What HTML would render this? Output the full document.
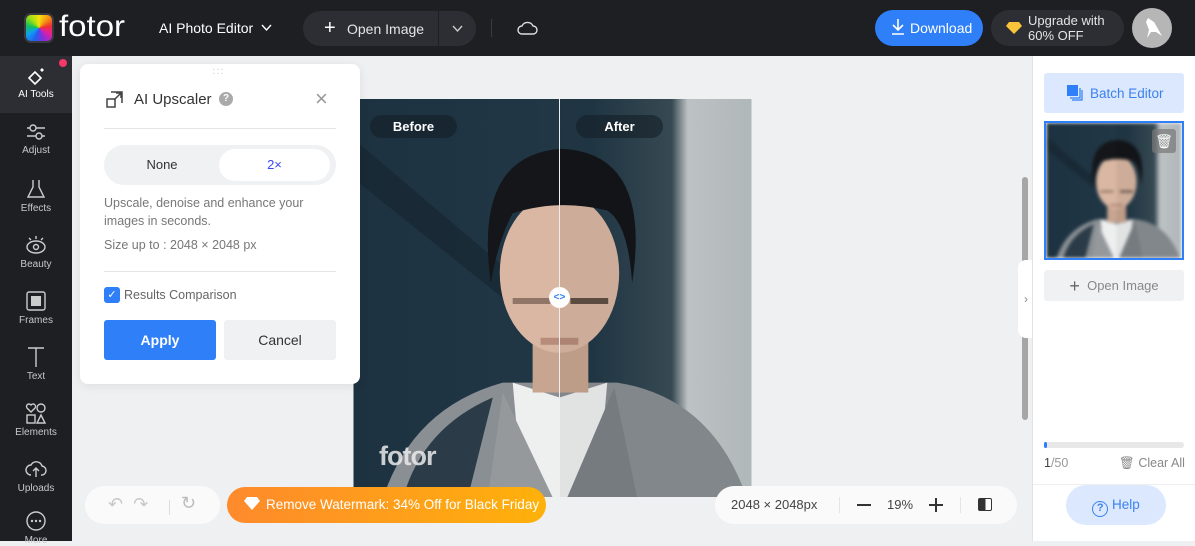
<!DOCTYPE html>
<html><head><meta charset="utf-8"><style>
*{box-sizing:border-box;margin:0;padding:0}
body{width:1195px;height:541px;overflow:hidden;background:#eff0f2;font-family:"Liberation Sans",sans-serif;position:relative}
.a{position:absolute}
.top{left:0;top:0;width:1195px;height:56px;background:#1e1f23}
.side{left:0;top:56px;width:72px;height:485px;background:#1e1f23}
.si{position:absolute;left:0;width:72px;text-align:center;color:#c5c8ce;font-size:10px}
.si svg{display:block;margin:0 auto 3px}
</style></head><body>
<svg width="0" height="0" style="position:absolute"><defs>
<linearGradient id="bg" x1="0" y1="0" x2="1" y2="0"><stop offset="0" stop-color="#1d3240"/><stop offset=".6" stop-color="#223847"/><stop offset=".8" stop-color="#3a4e58"/><stop offset=".84" stop-color="#c8cdcf"/><stop offset="1" stop-color="#b9c1c4"/></linearGradient>
<symbol id="portrait" viewBox="0 0 400 400">
<rect width="400" height="400" fill="url(#bg)"/>
<path d="M0 40 L200 210 L200 240 L0 80Z" fill="#16252f" opacity=".6"/>
<path d="M30 400 Q60 310 150 285 L265 285 Q360 300 395 400Z" fill="#8a8f93"/>
<path d="M50 400 Q70 330 140 300 L115 400Z" fill="#2b3c48"/>
<path d="M160 285 L207 300 L255 285 L245 400 L170 400Z" fill="#eef0f0"/>
<path d="M150 295 L200 400 L135 400Z" fill="#95999c"/>
<path d="M262 290 L215 400 L285 400Z" fill="#7d8286"/>
<rect x="180" y="225" width="56" height="70" fill="#c8a590"/>
<ellipse cx="207" cy="175" rx="60" ry="80" fill="#d9b7a2"/>
<path d="M138 185 Q120 55 210 50 Q300 55 280 185 Q276 125 255 112 Q205 100 160 115 Q146 140 138 185Z" fill="#14161a"/>
<rect x="160" y="200" width="38" height="6" fill="#4a362c" opacity=".5"/>
<rect x="218" y="200" width="38" height="6" fill="#2c211b" opacity=".7"/>
<rect x="188" y="240" width="38" height="7" fill="#a07060" opacity=".6"/>
<path d="M207 95 V260" stroke="none"/>
<path d="M207 0 V400 L400 400 V0Z" fill="#000" opacity=".05"/>
</symbol></defs></svg>

<div class="a top"></div>
<div class="a" style="left:24px;top:13px;width:30px;height:30px;border-radius:7px;background:conic-gradient(#f5e210,#f59a10,#f03030,#e020a0,#8030e0,#2060f0,#10a0f0,#10c060,#a0e010,#f5e210);border:2px solid #3a3b40"></div>
<div class="a" style="left:59px;top:10px;color:#fff;font-size:30px;transform:scaleX(1.1);transform-origin:left">fotor</div>
<div class="a" style="left:159px;top:20px;color:#fff;font-size:14px">AI Photo Editor</div>
<svg class="a" style="left:261px;top:24px" width="11" height="8"><path d="M1 1 L5.5 6 L10 1" stroke="#fff" stroke-width="1.4" fill="none"/></svg>
<div class="a" style="left:303px;top:11px;width:173px;height:35px;border-radius:18px;background:#2d2e33"></div>
<div class="a" style="left:438px;top:11px;width:1px;height:35px;background:#1e1f23"></div>
<div class="a" style="left:324px;top:17px;color:#fff;font-size:20px">+</div>
<div class="a" style="left:347px;top:21px;color:#e4e5e8;font-size:14px">Open Image</div>
<svg class="a" style="left:452px;top:25px" width="11" height="8"><path d="M1 1 L5.5 6 L10 1" stroke="#ccc" stroke-width="1.4" fill="none"/></svg>
<div class="a" style="left:491px;top:19px;width:1px;height:18px;background:#3a3b40"></div>
<svg class="a" style="left:516px;top:19px" width="22" height="18" viewBox="0 0 22 18"><path d="M6 15 H17 A4 4 0 0 0 17 7 A6 6 0 0 0 6 7 A4 4 0 0 0 6 15Z" fill="none" stroke="#ddd" stroke-width="1.4"/></svg>
<div class="a" style="left:875px;top:10px;width:108px;height:36px;border-radius:18px;background:#2e7ff8"></div>
<svg class="a" style="left:890px;top:18px" width="16" height="18"><path d="M8 1 V12 M3 7 L8 12 L13 7 M2 16 H14" stroke="#fff" stroke-width="1.6" fill="none"/></svg>
<div class="a" style="left:910px;top:20px;color:#fff;font-size:14px">Download</div>
<div class="a" style="left:991px;top:10px;width:133px;height:36px;border-radius:18px;background:#2d2e33"></div>
<svg class="a" style="left:1006px;top:22px" width="16" height="12"><path d="M3 0 H13 L16 4 L8 12 L0 4Z" fill="#f7c43a"/></svg>
<div class="a" style="left:1028px;top:13px;color:#e4e5e8;font-size:13px;line-height:15px">Upgrade with<br>60% OFF</div>
<div class="a" style="left:1132px;top:8px;width:40px;height:40px;border-radius:50%;background:#b6b6b6"></div>
<svg class="a" style="left:1142px;top:16px" width="22" height="24"><path d="M6 2 L12 6 L20 20 L14 16 L9 16 L5 22 L7 14 L4 6Z" fill="#fff"/></svg>

<div class="a side"></div>
<div class="a" style="left:0;top:56px;width:72px;height:57px;background:#2d2e33"></div>
<div class="a" style="left:59px;top:59px;width:8px;height:8px;border-radius:50%;background:#f5386a"></div>
<div class="si" style="top:66px;color:#fff"><svg width="22" height="20"><path d="M4 12 L10 6 L16 12 L10 18Z" fill="none" stroke="#fff" stroke-width="1.6"/><path d="M17 2 L19 4 L17 6 L15 4Z" fill="#fff"/></svg>AI Tools</div>
<div class="si" style="top:122px"><svg width="22" height="20"><path d="M2 6 H20 M2 14 H20" stroke="#ccc" stroke-width="1.4"/><circle cx="8" cy="6" r="3" fill="#1e1f23" stroke="#ccc" stroke-width="1.4"/><circle cx="14" cy="14" r="3" fill="#1e1f23" stroke="#ccc" stroke-width="1.4"/></svg>Adjust</div>
<div class="si" style="top:178px"><svg width="22" height="22"><path d="M8 2 V9 L3 19 H19 L14 9 V2" fill="none" stroke="#ccc" stroke-width="1.4"/></svg>Effects</div>
<div class="si" style="top:234px"><svg width="22" height="22"><ellipse cx="11" cy="13" rx="9" ry="6" fill="none" stroke="#ccc" stroke-width="1.4"/><circle cx="11" cy="13" r="2.5" fill="none" stroke="#ccc" stroke-width="1.4"/><path d="M11 2 V5 M4 4 L6 6 M18 4 L16 6" stroke="#ccc" stroke-width="1.4"/></svg>Beauty</div>
<div class="si" style="top:290px"><svg width="22" height="22"><rect x="2" y="2" width="18" height="18" rx="2" fill="none" stroke="#ccc" stroke-width="1.4"/><rect x="6" y="6" width="10" height="10" fill="#ccc"/></svg>Frames</div>
<div class="si" style="top:346px"><svg width="22" height="22"><path d="M3 2 H19 M11 2 V21" stroke="#ccc" stroke-width="1.4"/></svg>Text</div>
<div class="si" style="top:402px"><svg width="22" height="22"><circle cx="16" cy="6" r="4" fill="none" stroke="#ccc" stroke-width="1.4"/><path d="M6 10 L2 6 A2 2 0 0 1 6 3 A2 2 0 0 1 10 6Z" fill="none" stroke="#ccc" stroke-width="1.4"/><rect x="2" y="13" width="8" height="8" fill="none" stroke="#ccc" stroke-width="1.4"/><path d="M16 13 L20 21 H12Z" fill="none" stroke="#ccc" stroke-width="1.4"/></svg>Elements</div>
<div class="si" style="top:458px"><svg width="22" height="22"><path d="M6 17 A5 5 0 0 1 6 7 A6 6 0 0 1 17 8 A4.5 4.5 0 0 1 16 17" fill="none" stroke="#ccc" stroke-width="1.4"/><path d="M11 19 V10 M8 13 L11 10 L14 13" stroke="#ccc" stroke-width="1.4" fill="none"/></svg>Uploads</div>
<div class="si" style="top:510px"><svg width="22" height="22"><circle cx="11" cy="11" r="9" fill="none" stroke="#ccc" stroke-width="1.4"/><circle cx="7" cy="11" r="1.2" fill="#ccc"/><circle cx="11" cy="11" r="1.2" fill="#ccc"/><circle cx="15" cy="11" r="1.2" fill="#ccc"/></svg>More</div>

<svg class="a" style="left:353px;top:99px" width="399" height="398"><use href="#portrait" width="399" height="398"/></svg>
<div class="a" style="left:559px;top:99px;width:1px;height:398px;background:#eee"></div>
<div class="a" style="left:549px;top:287px;width:21px;height:21px;border-radius:50%;background:#fff;color:#2e7ff8;font-size:10px;text-align:center;line-height:21px;font-weight:bold">&lt;&gt;</div>
<div class="a" style="left:370px;top:115px;width:87px;height:23px;border-radius:12px;background:rgba(20,30,38,.6);color:#fff;font-size:13px;font-weight:bold;text-align:center;line-height:23px">Before</div>
<div class="a" style="left:576px;top:115px;width:87px;height:23px;border-radius:12px;background:rgba(20,30,38,.6);color:#fff;font-size:13px;font-weight:bold;text-align:center;line-height:23px">After</div>
<div class="a" style="left:379px;top:441px;color:rgba(235,235,235,.85);font-size:27px;font-weight:bold;letter-spacing:-1px">fotor</div>

<div class="a" style="left:80px;top:64px;width:280px;height:320px;background:#fff;border-radius:8px;box-shadow:0 2px 10px rgba(0,0,0,.08)"></div>
<div class="a" style="left:212px;top:68px;color:#ccc;font-size:10px;letter-spacing:1px;line-height:4px">···<br>···</div>
<svg class="a" style="left:106px;top:91px" width="18" height="18"><rect x="1" y="8" width="8" height="8" fill="none" stroke="#444" stroke-width="1.5"/><path d="M5 1 H16 V12 M8 9 L15 2 M10 2 H15 V7" fill="none" stroke="#444" stroke-width="1.5"/></svg>
<div class="a" style="left:134px;top:91px;color:#333;font-size:15px">AI Upscaler</div>
<div class="a" style="left:219px;top:92px;width:14px;height:14px;border-radius:50%;background:#aaa;color:#fff;font-size:10px;font-weight:bold;text-align:center;line-height:14px">?</div>
<div class="a" style="left:315px;top:86px;color:#999;font-size:22px">×</div>
<div class="a" style="left:104px;top:128px;width:232px;height:1px;background:#e5e5e5"></div>
<div class="a" style="left:104px;top:145px;width:232px;height:40px;border-radius:20px;background:#f0f1f3"></div>
<div class="a" style="left:219px;top:149px;width:111px;height:32px;border-radius:16px;background:#fff"></div>
<div class="a" style="left:104px;top:157px;width:116px;text-align:center;color:#333;font-size:13px">None</div>
<div class="a" style="left:219px;top:157px;width:111px;text-align:center;color:#3a4af0;font-size:13px">2×</div>
<div class="a" style="left:104px;top:194px;color:#777;font-size:12.5px;line-height:18px">Upscale, denoise and enhance your<br>images in seconds.</div>
<div class="a" style="left:104px;top:238px;color:#777;font-size:12.5px">Size up to : 2048 × 2048 px</div>
<div class="a" style="left:104px;top:271px;width:232px;height:1px;background:#e5e5e5"></div>
<div class="a" style="left:104px;top:287px;width:16px;height:16px;border-radius:3px;background:#2e7ff8;color:#fff;font-size:11px;text-align:center;line-height:16px">✓</div>
<div class="a" style="left:124px;top:288px;color:#666;font-size:12.5px">Results Comparison</div>
<div class="a" style="left:104px;top:320px;width:112px;height:40px;border-radius:3px;background:#2e7ff8;color:#fff;font-size:14px;font-weight:bold;text-align:center;line-height:40px">Apply</div>
<div class="a" style="left:224px;top:320px;width:112px;height:40px;border-radius:3px;background:#f0f1f3;color:#333;font-size:14px;text-align:center;line-height:40px">Cancel</div>

<div class="a" style="left:85px;top:486px;width:135px;height:38px;border-radius:19px;background:#fafafa"></div>
<div class="a" style="left:108px;top:494px;color:#c8c8c8;font-size:18px">↶ &nbsp;↷</div>
<div class="a" style="left:169px;top:500px;width:1px;height:15px;background:#ddd"></div>
<div class="a" style="left:181px;top:493px;color:#bbb;font-size:18px">↻</div>
<div class="a" style="left:227px;top:487px;width:319px;height:36px;border-radius:18px;background:linear-gradient(90deg,#fe8a2c,#feb10a)"></div>
<svg class="a" style="left:244px;top:497px" width="16" height="14"><path d="M3 0 H13 L16 4 L8 13 L0 4Z" fill="#fff"/></svg>
<div class="a" style="left:266px;top:497px;color:#fff;font-size:13.5px">Remove Watermark: 34% Off for Black Friday</div>
<div class="a" style="left:715px;top:486px;width:302px;height:38px;border-radius:19px;background:#fafafa"></div>
<div class="a" style="left:731px;top:497px;color:#444;font-size:13px">2048 × 2048px</div>
<div class="a" style="left:839px;top:497px;width:1px;height:16px;background:#e5e5e5"></div>
<div class="a" style="left:857px;top:504px;width:14px;height:2px;background:#333"></div>
<div class="a" style="left:887px;top:497px;color:#444;font-size:13px">19%</div>
<div class="a" style="left:929px;top:504px;width:14px;height:2px;background:#333"></div>
<div class="a" style="left:935px;top:498px;width:2px;height:14px;background:#333"></div>
<div class="a" style="left:960px;top:497px;width:1px;height:16px;background:#e5e5e5"></div>
<div class="a" style="left:978px;top:498px;width:14px;height:13px;border:1.5px solid #333;border-radius:2px;background:linear-gradient(90deg,#333 55%,#fff 55%)"></div>

<div class="a" style="left:1022px;top:177px;width:6px;height:243px;border-radius:3px;background:#a6a6a6"></div>
<div class="a" style="left:1018px;top:260px;width:16px;height:78px;border-radius:8px 0 0 8px;background:#fff;color:#888;font-size:12px;line-height:78px;text-align:center">›</div>

<div class="a" style="left:1032px;top:56px;width:163px;height:485px;background:#fff;border-left:1px solid #e2e2e2"></div>
<div class="a" style="left:1044px;top:73px;width:140px;height:40px;border-radius:3px;background:#dbe8fd"></div>
<svg class="a" style="left:1067px;top:85px" width="16" height="16"><rect x="0" y="0" width="11" height="11" fill="#2e7ff8"/><path d="M13 3 V13 H3 M15 5 V15 H5" stroke="#2e7ff8" fill="none" stroke-width="1.2"/></svg>
<div class="a" style="left:1090px;top:86px;color:#3b82f0;font-size:13.5px">Batch Editor</div>
<div class="a" style="left:1044px;top:121px;width:140px;height:139px;border:2px solid #2e7ff8;overflow:hidden"><svg width="136" height="135" style="filter:blur(1.5px)"><use href="#portrait" width="136" height="135"/></svg></div>
<div class="a" style="left:1152px;top:129px;width:24px;height:24px;border-radius:3px;background:rgba(120,120,120,.7);color:#fff;font-size:14px;text-align:center;line-height:24px">🗑</div>
<div class="a" style="left:1044px;top:270px;width:140px;height:31px;border-radius:3px;background:#f0f1f3;color:#888;font-size:13px;text-align:center;line-height:31px"><span style="font-size:18px;vertical-align:-2px;color:#666">+</span>&nbsp; Open Image</div>
<div class="a" style="left:1044px;top:442px;width:140px;height:6px;border-radius:3px;background:#e8e8e8"></div>
<div class="a" style="left:1044px;top:442px;width:3px;height:6px;border-radius:3px;background:#2e7ff8"></div>
<div class="a" style="left:1044px;top:456px;color:#999;font-size:12.5px"><span style="color:#444">1</span>/50</div>
<div class="a" style="left:1119px;top:456px;color:#888;font-size:12.5px">🗑 Clear All</div>
<div class="a" style="left:1033px;top:484px;width:162px;height:1px;background:#eee"></div>
<div class="a" style="left:1066px;top:485px;width:100px;height:40px;border-radius:20px;background:#dbe8fd;color:#3b82f0;font-size:13.5px;text-align:center;line-height:40px"><span style="display:inline-block;width:16px;height:16px;border:1.5px solid #3b82f0;border-radius:50%;font-size:11px;line-height:13px;vertical-align:-2px;font-weight:bold">?</span> Help</div>
</body></html>
